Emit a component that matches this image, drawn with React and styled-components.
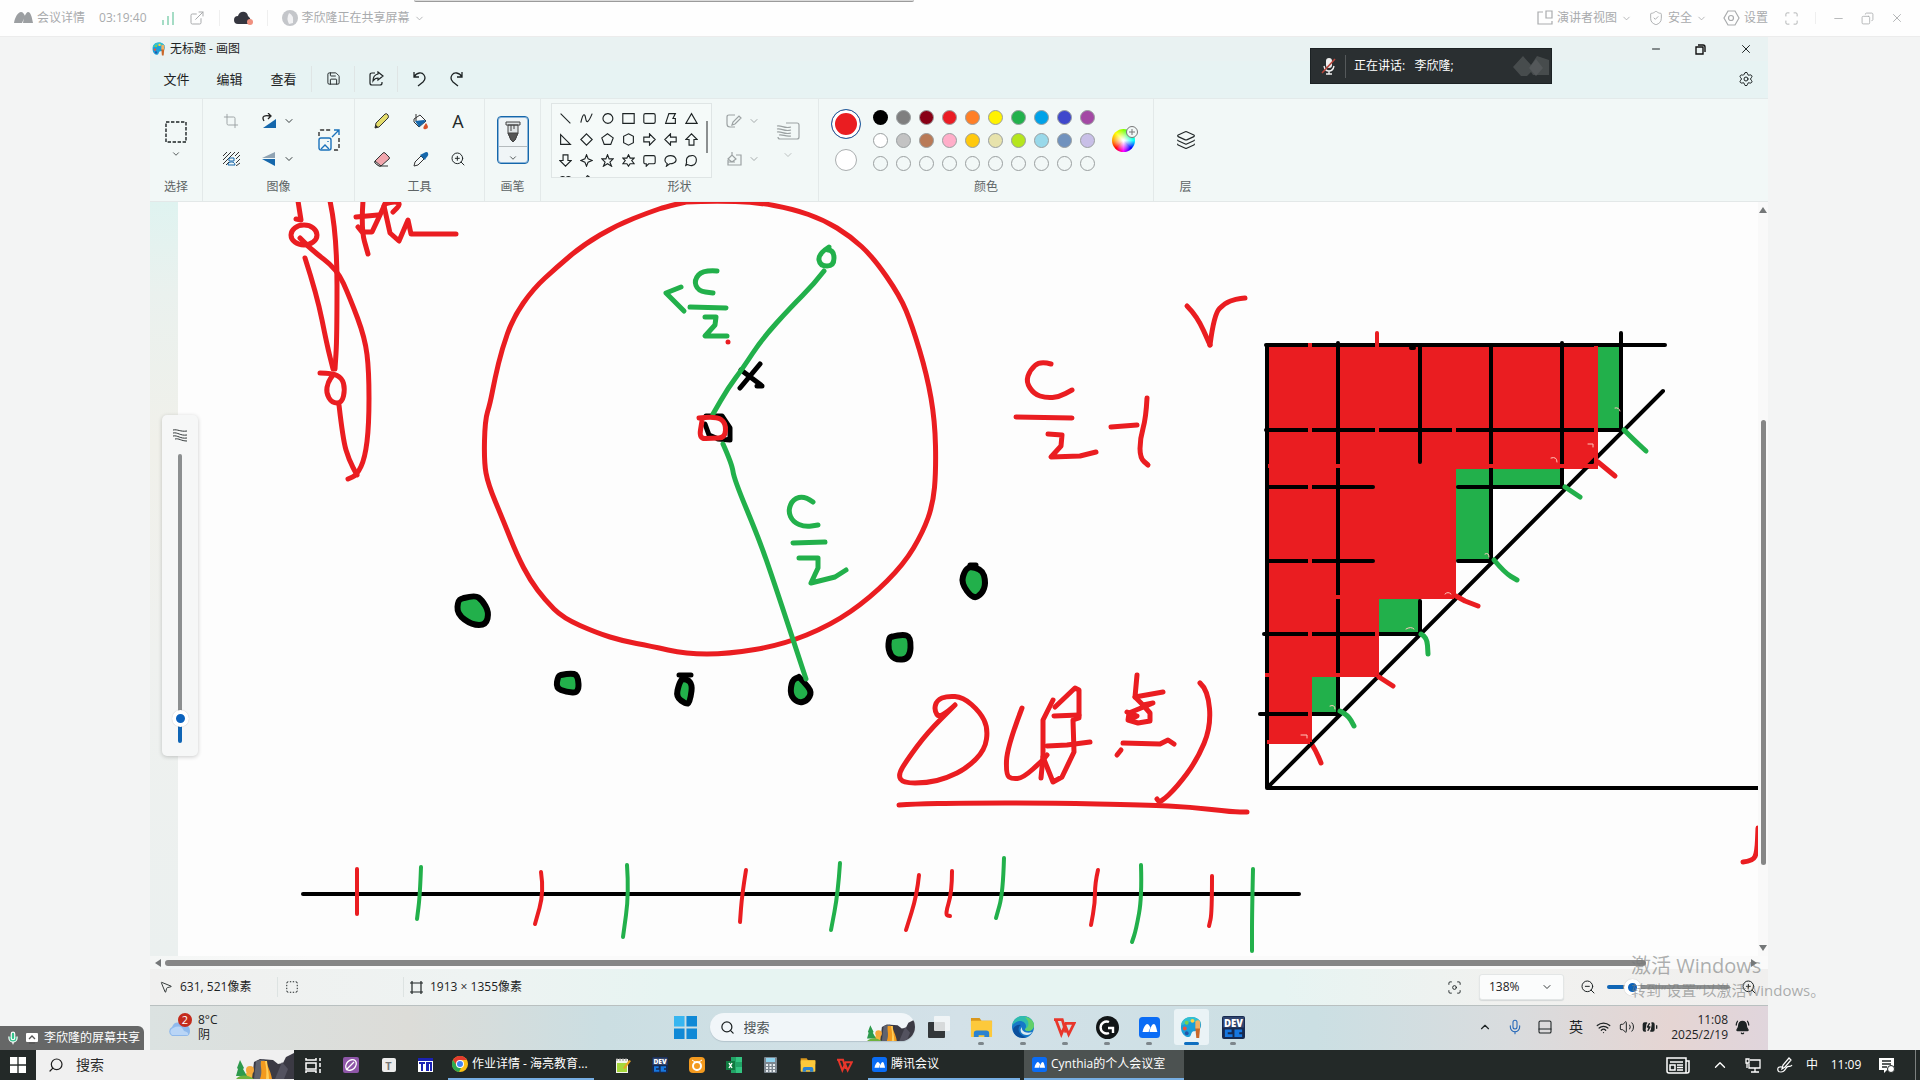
import { useState } from "react";
import styled, { createGlobalStyle } from "styled-components";
import {
  BatteryCharging,
  BellRing,
  ChevronDown,
  ChevronUp,
  Copy,
  Crop,
  ExternalLink,
  Focus,
  Layers,
  Maximize,
  Mic,
  Minus,
  MousePointer2,
  PanelBottom,
  Save,
  Search,
  Settings,
  ShieldCheck,
  SquareDashed,
  Volume2,
  Wifi,
  X,
  ZoomIn,
  ZoomOut,
} from "lucide-react";

const RED = "#ea1d21";
const GREEN = "#22b04b";

const GlobalStyle = createGlobalStyle`
  * {
    box-sizing: border-box;
  }
  body {
    margin: 0;
    font-family: "Open Sans", "Noto Sans CJK SC", sans-serif;
    font-size: 12px;
    line-height: 16px;
    color: #1d2324;
  }
  button, input, select {
    font: inherit;
    color: inherit;
    border: none;
    background: none;
    padding: 0;
    margin: 0;
    outline: none;
  }
  svg {
    display: block;
    flex: none;
  }
`;

const Page = styled.div`
  position: relative;
  display: flex;
  flex-direction: column;
  height: 100vh;
  overflow: hidden;
  background: #f3f4f4;
`;

/* ---------- meeting bar ---------- */

const MeetingBar = styled.header`
  display: flex;
  align-items: center;
  justify-content: space-between;
  height: 37px;
  padding: 0 16px 0 14px;
  background: #fefefe;
  color: #a9abad;
  border-bottom: 1px solid #ececec;
`;

const BarSide = styled.div`
  display: flex;
  align-items: center;
  gap: ${(props) => props.gap}px;
`;

const BarButton = styled.button`
  display: flex;
  align-items: center;
  gap: 4px;
  white-space: nowrap;
`;

const Divider = styled.span`
  width: 1px;
  height: ${(props) => props.size}px;
  background: ${(props) => props.tone || "#dfe5e5"};
`;

const DockedPanel = styled.div`
  position: absolute;
  top: 0;
  left: 414px;
  width: 500px;
  height: 2px;
  background: #dcdcdc;
  border-bottom: 1px solid #9b9b9b;
  border-radius: 0 0 3px 3px;
`;

const Stage = styled.main`
  position: relative;
  flex: 1;
  min-height: 0;
  display: flex;
  padding: 0 152px 0 150px;
`;

const ShareTag = styled.div`
  position: absolute;
  left: 0;
  bottom: 0;
  display: flex;
  align-items: center;
  gap: 6px;
  height: 24px;
  padding: 0 4px 0 6px;
  background: #666767;
  color: #fff;
  border-top-right-radius: 6px;
`;

/* ---------- paint window ---------- */

const Window = styled.section`
  position: relative;
  flex: 1;
  min-width: 0;
  display: flex;
  flex-direction: column;
  background: #eef3f2;
`;

const TitleBar = styled.div`
  display: flex;
  align-items: center;
  height: 24px;
  padding-left: 2px;
  gap: 4px;
  background: #e9f2f2;
`;

const Title = styled.h1`
  flex: 1;
  margin: 0;
  font-size: 12px;
  font-weight: 400;
`;

const MenuRow = styled.nav`
  display: flex;
  align-items: center;
  height: 37px;
  padding-bottom: 2px;
  background: #e7f3f3;
`;

const Cell = styled.button`
  display: flex;
  align-items: center;
  justify-content: center;
  width: ${(props) => props.w}px;
  height: 100%;
  font-size: ${(props) => props.size || 12}px;
`;

const Grow = styled.span`
  flex: 1;
`;

const Speaking = styled.div`
  position: absolute;
  top: 11px;
  right: 216px;
  display: flex;
  align-items: center;
  gap: 8px;
  width: 242px;
  height: 36px;
  padding: 0 2px 0 9px;
  background: #2a2f31;
  border: 1px solid #1c2224;
  color: #fff;
  white-space: pre;
`;

const Ribbon = styled.div`
  display: flex;
  height: 104px;
  padding: 1px 0;
  background: #f2f8f7;
  box-shadow: inset 0 1px #e3eaea, inset 0 -1px #e3e8e8;
`;

const Group = styled.div`
  display: flex;
  flex-direction: column;
  width: ${(props) => props.w}px;
  padding-bottom: 6px;
  color: #5d6465;
  text-align: center;
  border-right: 1px solid ${(props) => (props.last ? "transparent" : "#e3e9e9")};
`;

const GroupBody = styled.div`
  flex: 1;
  display: flex;
  align-items: center;
  justify-content: ${(props) => (props.start ? "flex-start" : "center")};
  padding: 2px 0 0 ${(props) => props.start || 0}px;
  gap: ${(props) => props.gap || 0}px;
  color: #23292a;
`;

const Stack = styled.div`
  display: flex;
  flex-direction: column;
  align-items: center;
  gap: ${(props) => props.gap}px;
`;

const ToolGrid = styled.div`
  display: grid;
  grid-template-columns: repeat(3, 38px);
  grid-auto-rows: 38px;
`;

const ImageGrid = styled.div`
  display: grid;
  grid-template-columns: 20px 40px 24px;
  grid-auto-rows: 38px;
  column-gap: 18px;
  align-items: center;
`;

const Tool = styled.button`
  display: flex;
  align-items: center;
  justify-content: center;
  grid-row: ${(props) => (props.tall ? "1 / span 2" : "auto")};
  grid-column: ${(props) => (props.tall ? 3 : "auto")};
  font-size: 18px;
`;

const Split = styled.button`
  display: grid;
  grid-template-columns: 20px 20px;
  justify-items: center;
  align-items: center;
  height: 38px;
  color: ${(props) => (props.muted ? "#9ca2a3" : "#23292a")};
`;

const BrushButton = styled.button`
  display: flex;
  flex-direction: column;
  align-items: center;
  width: 32px;
  height: 48px;
  border: 1px solid #1567ab;
  border-radius: 4px;
  background: #f0f5f7;
  box-shadow: 0 0 0 1px #8ab4d8 inset;

  svg:first-child {
    margin: 3px 0 2px;
  }
`;

const BrushArrow = styled.span`
  display: flex;
  justify-content: center;
  width: 28px;
  padding-top: 3px;
  border-top: 1px solid #b4babd;
`;

const ShapeBox = styled.div`
  position: relative;
  display: grid;
  grid-template-columns: repeat(7, 21px);
  grid-auto-rows: 21px;
  width: 161px;
  height: 75px;
  padding: 4px 3px;
  margin-right: 12px;
  overflow: hidden;
  background: #f5faf9;
  border: 1px solid #dfe5e5;

  &::after {
    content: "";
    position: absolute;
    top: 17px;
    right: 3px;
    width: 2px;
    height: 32px;
    background: #8b8f90;
  }
`;

const ShapeButton = styled.button`
  display: flex;
  align-items: center;
  justify-content: center;
`;

const ActiveColor = styled.button`
  width: ${(props) => (props.on ? 30 : 22)}px;
  height: ${(props) => (props.on ? 30 : 22)}px;
  border-radius: 50%;
  border: 1px solid ${(props) => (props.on ? "#1567ab" : "#aaaeaf")};
  background: ${(props) => props.color};
  box-shadow: ${(props) => (props.on ? "inset 0 0 0 3px #fff" : "none")};
`;

const Palette = styled.div`
  display: grid;
  grid-template-columns: repeat(10, 15px);
  grid-auto-rows: 15px;
  gap: 8px;
  margin-right: 5px;
`;

const Swatch = styled.button`
  border-radius: 50%;
  border: 1px solid ${(props) => (props.dark ? "transparent" : "#9a9fa0")};
  background: ${(props) => props.color};
`;

const Wheel = styled.button`
  position: relative;
  width: 23px;
  height: 23px;
  border-radius: 50%;
  background: radial-gradient(circle, #fff 5%, transparent 65%),
    conic-gradient(#8f0, #0f6, #0ff, #00f, #f0f, #f00, #f90, #ff0, #8f0);

  svg {
    position: absolute;
    top: -3px;
    right: -3px;
  }
`;

/* ---------- workspace ---------- */

const Workspace = styled.div`
  position: relative;
  flex: 1;
  min-height: 0;
  display: flex;
  padding-left: 28px;
  background: linear-gradient(#dff3f0, #eaf1ee 12%, #f0f0ea 32%, #eff1ef 60%, #ebf0ef);
`;

const Canvas = styled.svg`
  flex: 1;
  min-width: 0;
  height: 100%;
  background: #fdfdfd;
`;

const VScroll = styled.div`
  display: flex;
  flex-direction: column;
  align-items: center;
  width: 10px;
  background: #f9f9f9;
`;

const HScroll = styled.div`
  display: flex;
  align-items: center;
  height: 13px;
  background: linear-gradient(90deg, #f4f6f5, #fafafa 10%, #fafafa);
`;

const Thumb = styled.div`
  flex: ${(props) => props.share};
  width: ${(props) => (props.vertical ? "5px" : "auto")};
  height: ${(props) => (props.vertical ? "auto" : "6px")};
  border-radius: 3px;
  background: #868686;
`;

const Gap = styled.span`
  flex: ${(props) => props.share};
`;

const Arrow = styled.button`
  display: flex;
  align-items: center;
  justify-content: center;
  width: ${(props) => props.w}px;
  height: ${(props) => props.h}px;
`;

const SizePanel = styled.label`
  position: absolute;
  top: 213px;
  left: 12px;
  display: flex;
  flex-direction: column;
  align-items: center;
  gap: 11px;
  width: 36px;
  height: 341px;
  padding: 12px 0 13px;
  border-radius: 5px;
  background: #f6f7f7;
  box-shadow: 0 1px 4px rgba(0, 0, 0, 0.2);
`;

const Slider = styled.input`
  appearance: none;
  border-radius: 2px;
  writing-mode: ${(props) => (props.$vertical ? "vertical-lr" : "horizontal-tb")};
  direction: ${(props) => (props.$vertical ? "rtl" : "ltr")};
  width: ${(props) => (props.$vertical ? "4px" : "123px")};
  height: ${(props) => (props.$vertical ? "289px" : "4px")};
  background: linear-gradient(
    ${(props) => (props.$vertical ? "0deg" : "90deg")},
    #1065b5 ${(props) => props.$fill}%,
    #8c8f90 ${(props) => props.$fill}%
  );

  &::-webkit-slider-thumb {
    appearance: none;
    width: 17px;
    height: 17px;
    border-radius: 50%;
    border: 4px solid #fff;
    background: #0b62bd;
    box-shadow: 0 0 1px rgba(0, 0, 0, 0.25);
  }
`;

const StatusBar = styled.div`
  display: flex;
  align-items: center;
  height: 36px;
  padding: 0 11px 0 9px;
  background: linear-gradient(90deg, #f0f0ef, #eef3f2 20%, #e7f4f2 32%, #e7f4f2 70%, #f1f1ef 84%, #f0efee);
`;

const StatusItem = styled.div`
  display: flex;
  align-items: center;
  gap: 7px;
  width: ${(props) => props.w}px;
  padding-left: ${(props) => props.indent || 0}px;
  height: 20px;
  white-space: nowrap;
  border-right: 1px solid ${(props) => (props.line ? "#dde3e2" : "transparent")};
`;

const ZoomField = styled.label`
  display: grid;
  align-items: center;
  width: 85px;
  height: 26px;
  margin: 0 16px 0 17px;
  background: #fbfcfc;
  border: 1px solid #e3e6e6;
  border-radius: 3px;
  box-shadow: 0 1px 1px #d4d8d8;

  select {
    appearance: none;
    grid-area: 1 / 1;
    width: 100%;
    padding-left: 9px;
  }
  svg {
    grid-area: 1 / 1;
    justify-self: end;
    margin-right: 10px;
    pointer-events: none;
  }
`;

const ZoomControls = styled.div`
  display: flex;
  align-items: center;
  gap: 11px;
`;

/* ---------- taskbars ---------- */

const InnerTaskbar = styled.div`
  display: grid;
  grid-template-columns: 1fr auto 1fr;
  align-items: center;
  height: 45px;
  padding-bottom: 2px;
  border-top: 1px solid #b9c0c0;
  background: linear-gradient(
    90deg,
    #dbe2e1,
    #dcdcd8 16%,
    #cbdee2 28%,
    #d3e1e8 50%,
    #cbdfe3 72%,
    #d9dcde 84%,
    #e5d5d3 94%,
    #e0d5dc
  );
`;

const Weather = styled.div`
  display: flex;
  align-items: center;
  gap: 6px;
  padding-left: 17px;
  line-height: 15px;
`;

const Dock = styled.div`
  display: flex;
  align-items: center;
  gap: 7px;
`;

const DockItem = styled.button`
  position: relative;
  display: flex;
  align-items: center;
  justify-content: center;
  width: 35px;
  height: 36px;
  border-radius: 3px;
  background: ${(props) => (props.active ? "#eaf3f6" : "none")};

  &::after {
    content: "";
    position: absolute;
    bottom: 0;
    width: ${(props) => (props.active ? 15 : 6)}px;
    height: 3px;
    border-radius: 2px;
    background: ${(props) => (props.active ? "#0f6fc0" : props.open ? "#7d868b" : "transparent")};
  }
`;

const SearchPill = styled.label`
  display: flex;
  align-items: center;
  gap: 9px;
  width: 205px;
  height: 28px;
  padding-left: 10px;
  border-radius: 14px;
  overflow: hidden;
  background: #f1f6f9;
  box-shadow: 0 1px 1px #b4c4cc;

  input {
    flex: 1;
    min-width: 0;
    font-size: 13px;
  }
  input::placeholder {
    color: #4c5355;
  }
`;

const Tray = styled.div`
  display: flex;
  align-items: center;
  justify-content: flex-end;
  height: 100%;
  padding-right: ${(props) => props.end}px;
`;

const Clock = styled.time`
  margin: 0 7px 0 10px;
  line-height: 15px;
  text-align: right;
  min-width: 57px;
`;

const Taskbar = styled.footer`
  display: flex;
  align-items: stretch;
  height: 30px;
  background: #232928;
  color: #fff;
`;

const TaskSearch = styled.label`
  display: flex;
  align-items: center;
  gap: 12px;
  width: 258px;
  padding-left: 12px;
  background: #f0f0f0;
  color: #1c1c1c;

  input {
    flex: 1;
    min-width: 0;
    font-size: 14px;
  }
  input::placeholder {
    color: #2b2b2b;
  }
`;

const Task = styled.button`
  display: flex;
  align-items: center;
  gap: 4px;
  width: ${(props) => props.w}px;
  padding: 0 4px;
  margin-left: 4px;
  white-space: nowrap;
  background: ${(props) => (props.active ? "#4c5251" : "none")};
  border-bottom: 2px solid #76aee3;
`;

const AppRow = styled.div`
  display: flex;
  margin: 0 1px 0 10px;
`;

const Badge = styled.span`
  display: inline-flex;
  align-items: center;
  justify-content: center;
  width: ${(props) => props.box}px;
  height: ${(props) => props.box}px;
  border-radius: ${(props) => props.round || 2}px;
  background: ${(props) => props.bg};
  color: ${(props) => props.fg || "#fff"};
  font-size: ${(props) => props.size}px;
  line-height: 1;
  font-weight: 700;
`;

const ShowDesktop = styled.span`
  width: 5px;
  border-left: 1px solid #7c807f;
`;

const Watermark = styled.div`
  position: absolute;
  right: 94px;
  bottom: 79px;
  width: 195px;
  color: rgba(120, 122, 122, 0.6);
  white-space: nowrap;
  pointer-events: none;
  font-size: 15px;
  line-height: 22px;

  p {
    margin: 0;
  }
  p:first-child {
    font-size: 20px;
    line-height: 26px;
  }
`;

/* ---------- small drawings ---------- */

const Chevron = ({ size = 12, color }) => <ChevronDown size={size} strokeWidth={1.8} color={color} />;

const PaintLogo = ({ size }) => (
  <svg width={size} height={size} viewBox="0 0 24 24">
    <path d="M12 1C5 1 1 6 1 12s4 10 8 10c3 0 2-5 5-6 4-1 8-1 8-7 0-5-5-8-10-8z" fill="#1a9fd8" />
    <path d="M12 1C6 1 2 4 1 9c4 1 6-3 11-3 4 0 8 1 10 1-2-4-6-6-10-6z" fill="#31c0d0" />
    <circle cx="5" cy="13" r="2" fill="#f24f3b" />
    <circle cx="7" cy="7" r="2" fill="#7ccf4a" />
    <circle cx="13" cy="5" r="2" fill="#ffd23e" />
    <circle cx="7" cy="18" r="2" fill="#2456a8" />
    <path d="M16 12h5l-1 11h-3z" fill="#c9682a" />
    <path d="M16 6q3-3 5 0v7h-5z" fill="#f2b063" />
  </svg>
);

const WinLogo = ({ size, color, color2 }) => (
  <svg width={size} height={size} viewBox="0 0 24 24">
    <path d="M0 0h11v11H0z" fill={color} />
    <path d="M13 0h11v11H13zM0 13h11v11H0zM13 13h11v11H13z" fill={color2 || color} />
  </svg>
);

const MeetLogo = ({ size, bg, fg }) => (
  <svg width={size} height={size} viewBox="0 0 24 24">
    <rect width="24" height="24" rx="4" fill={bg} />
    <path d="M4 17c1-5 3-8 5-9 2 0 3 2 4 4l-2 5zM12 17c1-5 3-9 5-9s3 5 4 9z" fill={fg} />
  </svg>
);

const Folder = ({ size }) => (
  <svg width={size} height={size} viewBox="0 0 24 24">
    <path d="M1 2h9l2 3h11v6H1z" fill="#d9971c" />
    <rect x="1" y="5" width="22" height="17" rx="1" fill="#fdc93b" />
    <path d="M4 22v-4a3 3 0 0 1 3-3h10a3 3 0 0 1 3 3v4h-5v-2H9v2z" fill="#2c82d0" />
  </svg>
);

const Edge = () => (
  <svg width="24" height="24" viewBox="0 0 24 24">
    <circle cx="12" cy="12" r="11" fill="#1678c8" />
    <path d="M1 11C2 4 7 1 12 1c7 0 11 5 11 9 0 4-3 6-6 6-2 0-3-1-3-2 3-4-1-8-5-8-3 0-6 2-8 5z" fill="#2fbcae" />
    <path d="M14 2c6 1 9 5 9 8 0 4-3 6-6 6-2 0-3-1-3-2 3-1 6-6 0-12z" fill="#63d06a" />
    <path d="M10 10c-5 3-2 11 6 12-8 3-14-2-14-8 1-3 5-5 8-4z" fill="#0b4f9c" />
    <path d="M11 12c-1 4 4 7 10 5-1 2-3 3-5 3-6 0-8-5-5-8z" fill="#dcebf2" />
  </svg>
);

const Wps = ({ size }) => (
  <svg width={size} height={size} viewBox="0 0 24 24" fill="none" stroke="#e8362b" strokeWidth="3">
    <path d="M0 4h9l4 14M2 4l6 16 5-12h9l-6 12-4-10" />
  </svg>
);

const DevLogo = ({ size, text }) => (
  <svg width={size} height={size} viewBox="0 0 24 24">
    <rect width="24" height="24" rx="2" fill="#16294f" />
    <rect x="1" y="1" width="22" height="11" fill="#31456f" />
    <text x="12" y="11" textAnchor="middle" fontSize={text} fontWeight="800" fill="#fff">
      DEV
    </text>
    <path d="M3 14h7v3H6v2h5v3H3zM13 14h8v3h-3v2h3v3h-8z" fill="#1677e0" />
  </svg>
);

const Scenery = ({ w }) => (
  <svg width={w} height="28" viewBox="0 0 58 28" preserveAspectRatio="xMidYMax meet">
    <path d="M8 28c2-8 6-11 11-11l4 11z" fill="#f2b43c" />
    <path d="M16 28l2-17 6-3 13 1 5 4 5-1 3-6 6-3 2-1v26z" fill="#3b3a44" />
    <path d="M20 10l8-2 3 7-5 13h-8z" fill="#5f626e" />
    <path d="M46 11l6 7-4 10h-9z" fill="#53525f" />
    <path d="M25 10h6c0 6 4 10 5 18H24c3-8 0-12 1-18z" fill="#f29a1f" />
    <path d="M29 10h2c0 6 2 11 2 18h-3c1-8 0-12-1-18z" fill="#ffcf5a" />
    <path d="M4 9l4 8-1 1 4 7H0l2-7-1-1z" fill="#2d9a4c" />
    <path d="M0 28c5-5 12-4 18 0z" fill="#6fb23e" />
    <circle cx="14" cy="19" r="4" fill="#f6a83a" />
  </svg>
);

const Waves = ({ w }) => (
  <svg width={w} height={w} viewBox="0 0 16 16" fill="none" stroke="#33393a">
    <path d="M1 3c5-1 7 2 14 1M1 6c5-1 7 3 14 2M1 9c5-1 7 3 14 2M3 12c4-1 6 2 12 2" />
  </svg>
);

const Triangle = ({ turn }) => (
  <svg width="8" height="8" viewBox="0 0 8 8">
    <path d="M4 1l4 6H0z" fill="#747778" transform={`rotate(${turn} 4 4)`} />
  </svg>
);

const SHAPES = [
  "M2 2l12 12",
  "M1 13C4 0 6 2 7 8s3 6 8-6",
  "M8 2a6 6 0 1 0 1 0z",
  "M1 2h14v12H1z",
  "M3 2h10q2 0 2 2v8q0 2-2 2H3q-2 0-2-2V4q0-2 2-2z",
  "M6 2h8l-3 6h3v6H2z",
  "M8 2l7 12H1z",
  "M2 2v12h12z",
  "M8 1l7 7-7 7-7-7z",
  "M8 1l7 5-3 8H4L1 6z",
  "M8 1l6 3v8l-6 3-6-3V4z",
  "M1 5h7V1l7 7-7 7v-4H1z",
  "M15 5H8V1L1 8l7 7v-4h7z",
  "M5 15V8H1l7-7 7 7h-4v7z",
  "M5 1v7H1l7 7 7-7h-4V1z",
  "M8 1l2 5 5 2-5 2-2 5-2-5-5-2 5-2z",
  "M8 1l2 5h5l-4 4 2 5-5-3-5 3 2-5-4-4h5z",
  "M8 1l2 4h5l-3 3 3 4h-5l-2 3-2-3H1l3-4-3-3h5z",
  "M3 2h10q2 0 2 2v6q0 2-2 2H7l-3 3v-3H3q-2 0-2-2V4q0-2 2-2z",
  "M4 12C-1 9 1 2 8 2s9 7 4 9c-2 1-4 1-5 1l-4 3z",
  "M8 2c3-1 6 2 6 5s-1 6-5 7c-2 1-5-1-6-1l-2 1 1-4C1 6 3 2 8 2z",
  "M8 4C5 0 0 2 2 7l6 7 6-7c2-5-3-7-6-3z",
  "M9 1L4 8h4l-2 7 7-8H9l2-5z",
];

const COLORS = [
  "#000", "#7f7f7f", "#880015", "#ea1c24", "#ff7f27", "#fff200", "#22b14c", "#00a2e8", "#3f48cc", "#a349a4",
  "#fff", "#c3c3c3", "#b97a57", "#ffaec9", "#ffc90e", "#e7e3ac", "#b5e61d", "#99d9ea", "#7092be", "#c8bfe7",
];

/* ---------- canvas drawing ---------- */

// joins the midpoints of the given points with quadratic curves
const smooth = (text) => {
  const p = text.split(" ").map((s) => s.split(",").map(Number));
  let d = `M${p[0]}`;
  for (let i = 1; i < p.length - 1; i++) {
    d += `Q${p[i]} ${(p[i][0] + p[i + 1][0]) / 2},${(p[i][1] + p[i + 1][1]) / 2}`;
  }
  return d + `L${p[p.length - 1]}`;
};

const RED_CURVES = [
  "686,202 668,206 650,212 617,225 583,245 557,267 533,289 513,318 502,349 495,378 490,404 485,420 484,462 488,484 503,520 517,555 530,580 545,600 563,618 597,633 623,641 650,646 686,654 728,654 782,645 831,625 870,598 904,564 923,532 933,504 936,471 935,421 927,375 912,325 900,296 873,257 850,236 824,220 793,209 755,202 716,201 686,202",
  "305,258 317,295 327,345 333,369",
  "300,238 310,249 337,269 350,298 365,338 369,371 369,425 365,458 357,475 348,479",
  "320,373 332,373 342,378 345,389 342,403 332,403 326,393 328,382 333,375",
  "1051,364 1040,361 1030,370 1026,382 1034,394 1046,398 1059,397 1072,390",
  "955,705 940,719 934,710 937,700 947,696 963,697 980,712 988,728 985,750 967,768 947,778 927,783 903,783 898,775 907,760 927,733 955,705",
  "1022,708 1007,747 1006,775 1012,779 1023,778 1043,760 1047,755",
  "1200,683 1208,690 1211,727 1197,760 1177,787 1160,803 1157,799",
  "899,805 913,804 963,803 1047,803 1147,805 1190,807 1233,812 1247,812",
  "1743,862 1753,861 1757,852 1758,828",
  "330,201 337,233 337,338 335,369",
  "339,405 343,440 349,460 357,475",
  "363,201 361,229 368,254",
  "1147,398 1146,418 1140,439 1140,458 1148,465",
  "1210,345 1214,314 1225,303 1236,299 1245,298",
  "1187,306 1197,316 1210,345",
  "385,204 394,201 401,204 393,212",
  "1311,743 1316,751 1321,763",
];

const RED_LINES = [
  "298,201 301,220 296,219",
  "356,217 378,215",
  "358,227 362,232 372,232 380,215 385,204",
  "384,206 390,233 399,241 408,220 411,234 456,234",
  "1016,417 1072,418",
  "1048,434 1062,435 1061,446 1051,457 1080,456 1096,452",
  "1111,427 1137,425",
  "1053,700 1043,720 1043,757 1041,778",
  "1055,707 1075,688 1079,690 1079,718 1073,720 1074,752 1062,777 1053,782 1047,767 1043,757",
  "1054,716 1079,715",
  "1047,746 1067,745 1090,742",
  "1137,675 1135,697 1163,692",
  "1135,697 1143,705 1153,703 1129,713 1128,720 1138,723 1150,721 1150,713 1143,705",
  "1127,712 1137,716 1131,719",
  "1123,743 1160,744 1168,740 1174,744",
  "1117,755 1121,750",
  "1598,462 1615,476",
  "1456,596 1465,601 1478,606",
  "1379,677 1393,686",
];

const GREEN_CURVES = [
  "824,271 814,284 791,307 762,339 743,368 728,388 713,414",
  "723,444 732,464 734,479 759,539 774,582 806,679",
  "717,271 703,270 694,280 698,291 713,293",
  "813,502 805,496 793,499 788,511 793,522 805,527 818,525",
  "1624,430 1633,439 1646,451",
  "1494,560 1505,573 1517,580",
  "1421,634 1427,637 1428,654",
  "1340,711 1348,715 1354,726",
];

const GREEN_LINES = [
  "681,287 666,293 684,311",
  "690,307 726,308",
  "705,317 716,317 715,325 705,336 727,336",
  "793,543 825,542",
  "799,558 818,558 818,568 811,583 835,577 846,570",
  "1565,487 1580,497",
];

const BLOBS = [
  "464,598 475,595 482,600 489,612 486,625 472,625 457,614 458,600 464,598",
  "561,675 570,673 578,675 579,693 566,692 556,688 558,676 561,675",
  "682,679 693,679 690,703 686,704 676,697 679,684 682,679",
  "799,677 804,682 812,692 807,701 798,703 790,695 792,680 799,677",
  "891,637 902,634 911,637 910,659 894,660 888,650 889,638 891,637",
  "970,567 982,568 986,583 982,594 973,599 961,583 965,570 970,567",
];

const TICKS = [
  [RED, "357,869 357,914"],
  [GREEN, "421,867 420,895 417,919"],
  [RED, "541,872 544,892 535,924"],
  [GREEN, "627,865 629,893 623,937"],
  [RED, "746,870 742,895 740,922"],
  [GREEN, "840,863 838,893 831,930"],
  [RED, "919,875 917,895 906,930"],
  [RED, "952,871 952,892 945,915 950,916"],
  [GREEN, "1004,858 1003,893 996,918"],
  [RED, "1098,870 1095,883 1095,903 1091,925"],
  [GREEN, "1141,865 1142,897 1136,930 1132,942"],
  [RED, "1212,876 1212,913 1209,926"],
  [GREEN, "1253,869 1252,913 1252,951"],
];

const Drawing = () => (
  <Canvas
    viewBox="178 202 1580 754"
    preserveAspectRatio="xMinYMin slice"
    fill="none"
    strokeLinecap="round"
    strokeLinejoin="round"
  >
    <g stroke={RED} strokeWidth="5">
      {RED_CURVES.map((c) => (
        <path key={c} d={smooth(c)} />
      ))}
      <ellipse cx="304" cy="235" rx="13" ry="10" />
    </g>
    <path d="M741,370L761,385M760,364L740,388M757,386h5" stroke="#000" strokeWidth="5" />
    <g stroke="#000" strokeWidth="6" fill={GREEN}>
      {BLOBS.map((b) => (
        <path key={b} d={smooth(b)} />
      ))}
      <path d="M679,675h12M970,565h6" strokeWidth="5" />
    </g>
    <path d="M706,416L722,416L730,428L730,440L718,439M705,424L709,435L716,438" stroke="#000" strokeWidth="5" />

    <path d="M1267,346H1598V469H1456V599H1379V677H1312V743H1267z" fill={RED} />
    <path
      d="M1598,346h23v84h-23zM1456,469h107v18h-72v74h-35zM1379,599h41v35h-41zM1312,677h26v37h-26z"
      fill={GREEN}
    />
    <g stroke="#000" strokeWidth="4">
      <path d="M1267,345V788H1758M1266,345H1665M1338,343V714M1420,345V462M1420,601V634M1491,345V561M1562,343V487M1621,333V430" />
      <path d="M1266,430H1621M1268,487H1373M1458,487H1562M1268,561H1373M1458,561H1491M1264,634H1421M1260,714H1338" />
      <path d="M1268,787L1663,391M1411,348h3" />
    </g>
    <g stroke={RED} strokeWidth="4" strokeLinecap="butt">
      <path d="M1310,343V742M1377,343V675M1454,428V597M1596,346V467M1268,466H1596M1270,597H1454M1265,675H1377M1267,742H1310" />
      <path d="M1377,333V345" strokeLinecap="round" />
    </g>
    <path
      d="M1615,408q4-1 5,3M1588,444h5v3M1551,458q6-2 6,4M1485,554q4-2 4,3M1445,594q3-3 6,0M1406,629q5-3 8,0M1330,706q5-2 5,3M1301,735h6v3"
      stroke="#ffc9bd"
      strokeWidth="1"
    />

    <g stroke={RED} strokeWidth="5">
      {RED_LINES.map((p) => (
        <polyline key={p} points={p} />
      ))}
      <path d="M728,342v0" />
    </g>
    <g stroke={GREEN} strokeWidth="5">
      {GREEN_CURVES.map((c) => (
        <path key={c} d={smooth(c)} />
      ))}
      {GREEN_LINES.map((p) => (
        <polyline key={p} points={p} />
      ))}
      <path d="M829,247Q818,254 819,260T827,266T834,258T828,250z" />
    </g>
    <path d={smooth("699,418 716,416 726,423 725,438 712,438 699,439 702,421")} stroke={RED} strokeWidth="5" />

    <path d="M303,894H1299" stroke="#000" strokeWidth="4" />
    {TICKS.map(([color, points]) => (
      <path key={points} d={smooth(points)} stroke={color} strokeWidth="4" />
    ))}
  </Canvas>
);

const RibbonBar = () => (
  <Ribbon>
    <Group w={53}>
      <GroupBody>
        <Stack gap={6}>
          <svg width="22" height="22" viewBox="0 0 22 22" fill="none" stroke="#1d2324">
            <rect x="1" y="1" width="20" height="20" strokeWidth="1.4" strokeDasharray="3.4 1.6" />
          </svg>
          <Chevron size={10} />
        </Stack>
      </GroupBody>
      选择
    </Group>
    <Group w={152}>
      <GroupBody start={18}>
        <ImageGrid>
          <Tool aria-label="裁剪">
            <Crop size={16} strokeWidth={1.4} color="#9aa0a1" />
          </Tool>
          <Split aria-label="旋转">
            <svg width="16" height="16" viewBox="0 0 16 16" fill="none">
              <path d="M15 6v9H2z" fill="#1567ab" />
              <path d="M3 8C0 3 4 2 9 3M7 0l3 3-3 3" stroke="#222" strokeWidth="1.3" />
            </svg>
            <Chevron />
          </Split>
          <Tool tall aria-label="调整大小">
            <svg width="22" height="22" viewBox="0 0 22 22" fill="none" strokeWidth="1.4">
              <path d="M1 7V3q0-2 2-2h11M21 9v10q0 2-2 2h-3" stroke="#333" strokeDasharray="4 2" />
              <rect x="1" y="9" width="12" height="12" rx="2" stroke="#1b72bb" />
              <path d="M3 20l4-4 4 4M14 8l7-7M16 1h5v5M10 12v1" stroke="#1b72bb" />
            </svg>
          </Tool>
          <Tool aria-label="透明">
            <svg width="17" height="14" viewBox="0 0 17 14" stroke="#333" fill="none">
              <path d="M0 4l4-4M0 8l8-8M0 12l12-12M3 13l3-3M12 4l4-4M13 7l4-4M13 11l4-4M13 14l4-3" />
              <path d="M5 13c0-4 7-4 7 0M6 6h5v3H6zM5 13h7" stroke="#1567ab" />
            </svg>
          </Tool>
          <Split aria-label="翻转">
            <svg width="16" height="14" viewBox="0 0 16 14">
              <path d="M14 0v6H1z" fill="#8fa3b3" />
              <path d="M1 7h13v7z" fill="#1567ab" />
            </svg>
            <Chevron />
          </Split>
        </ImageGrid>
      </GroupBody>
      图像
    </Group>
    <Group w={130}>
      <GroupBody start={8}>
        <ToolGrid>
          <Tool aria-label="铅笔">
            <svg width="16" height="16" viewBox="0 0 16 16">
              <path d="M1 15l1-5 9-9q2-1 3 1t0 3l-9 9z" fill="#e3dc6b" stroke="#333" />
              <path d="M1 15l1-3 2 2z" fill="#222" />
            </svg>
          </Tool>
          <Tool aria-label="填充">
            <svg width="17" height="17" viewBox="0 0 17 17">
              <path d="M2 6l6-4 6 6-7 6-5-5z" fill="#f8fbfb" stroke="#333" />
              <path d="M3 8l9-1 2 1-7 6z" fill="#1567ab" />
              <path d="M4 1v7" stroke="#333" />
              <path d="M14 10q4 5 0 6t-2-3z" fill="#d8532a" />
            </svg>
          </Tool>
          <Tool aria-label="文本">A</Tool>
          <Tool aria-label="橡皮擦">
            <svg width="17" height="17" viewBox="0 0 17 17" stroke="#333">
              <path d="M1 10l8-8q1-1 2 0l4 4q1 1 0 2l-8 7H5l-4-3z" fill="#f1a7ae" />
              <path d="M1 10l6 5H5l-4-3zM7 15h7" fill="#fff" />
            </svg>
          </Tool>
          <Tool aria-label="取色器">
            <svg width="17" height="17" viewBox="0 0 17 17">
              <path d="M2 15l1-4 6-6 3 3-6 6z" fill="#f4f8f8" stroke="#333" />
              <path d="M8 4l5 5 1-2 1-1q2-2 1-4t-4 0l-2 1z" fill="#1567ab" />
            </svg>
          </Tool>
          <Tool aria-label="放大镜">
            <ZoomIn size={16} strokeWidth={1.5} />
          </Tool>
        </ToolGrid>
      </GroupBody>
      工具
    </Group>
    <Group w={56}>
      <GroupBody>
        <BrushButton aria-label="画笔">
          <svg width="16" height="24" viewBox="0 0 16 24" stroke="#444">
            <path d="M1 2h14v3H1zM3 5h10v8l-3 7H6l-3-7z" fill="#dfe4e6" />
            <path d="M3 13h10l-3 7-2 2-2-2z" fill="#555" />
            <path d="M6 5v6M9 5v4" fill="none" />
          </svg>
          <BrushArrow>
            <Chevron size={10} />
          </BrushArrow>
        </BrushButton>
      </GroupBody>
      画笔
    </Group>
    <Group w={278}>
      <GroupBody start={10}>
        <ShapeBox>
          {SHAPES.map((d, i) => (
            <ShapeButton key={d} aria-label={`形状 ${i + 1}`}>
              <svg width="13" height="13" viewBox="0 0 16 16" fill="none" stroke="#1d2324" strokeWidth="1.4">
                <path d={d} />
              </svg>
            </ShapeButton>
          ))}
        </ShapeBox>
        <Stack gap={0}>
          <Split muted aria-label="形状轮廓">
            <svg width="16" height="14" viewBox="0 0 16 14" fill="none" stroke="#9ca2a3" strokeWidth="1.2">
              <path d="M9 1H3Q1 1 1 3v7q0 3 3 3h5M6 11l1-3 6-6 2 2-6 6z" />
            </svg>
            <Chevron />
          </Split>
          <Split muted aria-label="形状填充">
            <svg width="16" height="14" viewBox="0 0 16 14" fill="none" stroke="#9ca2a3" strokeWidth="1.2">
              <path d="M10 3h5v10H2V8M2 7l4-4 4 4-4 3zM6 3V0M2 10h7" />
            </svg>
            <Chevron />
          </Split>
        </Stack>
        <GroupBody start={12}>
          <Stack gap={9}>
            <svg width="24" height="18" viewBox="0 0 24 18" fill="none" stroke="#9ca2a3" strokeWidth="1.2">
              <path d="M10 1h11q2 0 2 2v12q0 2-2 2H4q-2 0-2-2M1 4c5-1 7 3 14 1M1 7c5-1 7 3 14 1M1 10c5-1 7 3 14 1M3 13c4-1 6 2 12 1" />
            </svg>
            <Chevron size={12} color="#b5baba" />
          </Stack>
        </GroupBody>
      </GroupBody>
      形状
    </Group>
    <Group w={335}>
      <GroupBody start={12} gap={12}>
        <Stack gap={10}>
          <ActiveColor on color={RED} aria-label="颜色 1" />
          <ActiveColor color="#fff" aria-label="颜色 2" />
        </Stack>
        <Palette>
          {COLORS.map((c) => (
            <Swatch key={c} color={c} dark={c === "#000"} aria-label={c} />
          ))}
          {COLORS.slice(0, 10).map((c, i) => (
            <Swatch key={i} color="none" aria-label="空" />
          ))}
        </Palette>
        <Wheel aria-label="编辑颜色">
          <svg width="12" height="12" viewBox="0 0 12 12" fill="#f2f8f7" stroke="#777">
            <circle cx="6" cy="6" r="5.5" />
            <path d="M6 3v6M3 6h6" />
          </svg>
        </Wheel>
      </GroupBody>
      颜色
    </Group>
    <Group w={64} last>
      <GroupBody>
        <Layers size={20} strokeWidth={1.4} />
      </GroupBody>
      层
    </Group>
  </Ribbon>
);

const App = () => {
  let [brush, setBrush] = useState(6);
  let [zoom, setZoom] = useState(16);

  return (
    <Page>
      <GlobalStyle />
      <MeetingBar>
        <BarSide gap={14}>
          <BarButton>
            <svg width="19" height="14" viewBox="0 0 19 14" fill="#9c9fa2">
              <path d="M0 12C1 6 4 1 7 1c2 0 3 2 4 4l-3 7zM9 12c1-6 3-11 5-11 3 0 4 6 5 11z" />
            </svg>
            会议详情
          </BarButton>
          <span>03:19:40</span>
          <svg width="14" height="14" viewBox="0 0 14 14" fill="#a5dcc5">
            <path d="M1 9h2v5H1zM6 5h2v9H6zM11 1h2v13h-2z" />
          </svg>
          <ExternalLink size={16} strokeWidth={1.5} />
          <Divider size={16} tone="#efefef" />
          <svg width="19" height="14" viewBox="0 0 19 14" fill="#35363f">
            <path d="M4 13a4 4 0 0 1 0-8C5 0 13-1 14 5q5 4 1 8z" />
            <circle cx="16" cy="11" r="3" fill="#f0907f" />
          </svg>
          <Divider size={16} tone="#efefef" />
          <BarButton>
            <svg width="16" height="16" viewBox="0 0 16 16">
              <circle cx="8" cy="8" r="8" fill="#c4c6ca" />
              <path d="M7 3q5 2 4 10l-4 1q-3-5 0-11z" fill="#f2f2f4" />
            </svg>
            李欣隆正在共享屏幕
            <Chevron size={11} />
          </BarButton>
        </BarSide>
        <BarSide gap={16}>
          <BarButton>
            <svg width="16" height="16" viewBox="0 0 16 16" fill="none" stroke="currentColor" strokeWidth="1.2">
              <path d="M6 2H1v12h14v-3M9 1h6v7H9z" />
            </svg>
            演讲者视图
            <Chevron size={11} />
          </BarButton>
          <BarButton>
            <ShieldCheck size={16} strokeWidth={1.4} />
            安全
            <Chevron size={11} />
          </BarButton>
          <BarButton>
            <svg width="17" height="16" viewBox="0 0 17 16" fill="none" stroke="currentColor" strokeWidth="1.2">
              <path d="M5 1h7l4 7-4 7H5L1 8z" />
              <circle cx="8" cy="8" r="2.5" />
            </svg>
            设置
          </BarButton>
          <Maximize size={15} strokeWidth={1.4} />
          <Divider size={12} tone="#efefef" />
          <Minus size={13} strokeWidth={1.5} />
          <Copy size={13} strokeWidth={1.5} transform="scale(-1 1)" />
          <X size={14} strokeWidth={1.5} />
        </BarSide>
      </MeetingBar>
      <DockedPanel />

      <Stage>
        <Window>
          <TitleBar>
            <PaintLogo size={14} />
            <Title>无标题 - 画图</Title>
            <Cell w={40} aria-label="最小化">
              <Minus size={12} strokeWidth={2} />
            </Cell>
            <Cell w={40} aria-label="还原">
              <svg width="11" height="11" viewBox="0 0 11 11" fill="none" stroke="#111" strokeWidth="1.4">
                <path d="M1 3h7v7H1zM3 1h5q2 0 2 2v5" />
              </svg>
            </Cell>
            <Cell w={44} aria-label="关闭">
              <X size={14} strokeWidth={1.7} />
            </Cell>
          </TitleBar>
          <MenuRow>
            <Cell w={53} size={13}>文件</Cell>
            <Cell w={53} size={13}>编辑</Cell>
            <Cell w={55} size={13}>查看</Cell>
            <Divider size={26} />
            <Cell w={42} aria-label="保存">
              <Save size={15} strokeWidth={1.5} />
            </Cell>
            <Divider size={26} />
            <Cell w={42} aria-label="共享">
              <svg width="15" height="15" viewBox="0 0 15 15" fill="none" stroke="#1d2324" strokeWidth="1.2">
                <path d="M6 2H3Q1 2 1 4v8q0 2 2 2h8q2 0 2-2v-1M9 1l5 4-5 4V7Q6 7 4 10q0-6 5-7z" />
              </svg>
            </Cell>
            <Divider size={26} />
            <Cell w={42} aria-label="撤消">
              <svg width="15" height="16" viewBox="0 0 15 16" fill="none" stroke="#1d2324" strokeWidth="1.3">
                <path d="M2 1v5h5M2 6c3-5 8-5 10-2s1 5-1 7l-5 4" />
              </svg>
            </Cell>
            <Cell w={32} aria-label="重做">
              <svg width="15" height="16" viewBox="0 0 15 16" fill="none" stroke="#1d2324" strokeWidth="1.3">
                <path d="M13 1v5H8M13 6C10 1 5 1 3 4s-1 5 1 7l5 4" />
              </svg>
            </Cell>
            <Grow />
            <Cell w={44} aria-label="设置">
              <Settings size={16} strokeWidth={1.5} />
            </Cell>
          </MenuRow>

          <RibbonBar />

          <Workspace>
            <Drawing />
            <VScroll>
              <Arrow w={10} h={16} aria-label="向上">
                <Triangle turn={0} />
              </Arrow>
              <Gap share={202} />
              <Thumb vertical share={446} />
              <Gap share={75} />
              <Arrow w={10} h={16} aria-label="向下">
                <Triangle turn={180} />
              </Arrow>
            </VScroll>
            <SizePanel>
              <Waves w={16} />
              <Slider
                type="range"
                aria-label="画笔大小"
                $vertical
                $fill={8}
                value={brush}
                onChange={(e) => setBrush(e.target.value)}
              />
            </SizePanel>
          </Workspace>
          <HScroll>
            <Arrow w={15} h={13} aria-label="向左">
              <Triangle turn={-90} />
            </Arrow>
            <Thumb share={1481} />
            <Gap share={94} />
            <Arrow w={28} h={13} aria-label="向右">
              <Triangle turn={90} />
            </Arrow>
          </HScroll>

          <StatusBar>
            <StatusItem w={119} line>
              <MousePointer2 size={14} strokeWidth={1.5} />
              631, 521像素
            </StatusItem>
            <StatusItem w={126} indent={7} line>
              <SquareDashed size={14} strokeWidth={1.7} />
            </StatusItem>
            <StatusItem w={140} indent={6}>
              <svg width="13" height="13" viewBox="0 0 13 13" fill="none" stroke="#1d2324" strokeWidth="1.2">
                <path d="M2 0v13M11 0v13M0 2h13M0 11h13" />
              </svg>
              1913 × 1355像素
            </StatusItem>
            <Grow />
            <Focus size={15} strokeWidth={1.5} />
            <ZoomField>
              <select aria-label="缩放" defaultValue="138%">
                <option>138%</option>
                <option>100%</option>
              </select>
              <Chevron />
            </ZoomField>
            <ZoomControls>
              <ZoomOut size={16} strokeWidth={1.5} />
              <Slider
                type="range"
                aria-label="缩放比例"
                $fill={13}
                value={zoom}
                onChange={(e) => setZoom(e.target.value)}
              />
              <ZoomIn size={16} strokeWidth={1.5} />
            </ZoomControls>
          </StatusBar>

          <InnerTaskbar>
            <Weather>
              <svg width="25" height="28" viewBox="0 0 25 28">
                <path d="M5 23a5 5 0 0 1 0-9q3-7 10-3 8 0 8 7 0 5-4 5z" fill="#8fb9ec" />
                <path d="M5 22a4 4 0 0 1 1-7q8-4 11 3 5 1 4 4z" fill="#b9d5f6" />
                <circle cx="18" cy="7" r="7" fill="#c42b1c" />
                <text x="18" y="11" textAnchor="middle" fontSize="11" fill="#fff">
                  2
                </text>
              </svg>
              <div>
                8°C
                <br />阴
              </div>
            </Weather>
            <Dock>
              <DockItem aria-label="开始">
                <WinLogo size={23} color="#38b6f0" color2="#1089d6" />
              </DockItem>
              <SearchPill>
                <Search size={15} strokeWidth={2} />
                <input type="text" aria-label="搜索" placeholder="搜索" />
                <Scenery w={48} />
              </SearchPill>
              <DockItem aria-label="任务视图">
                <svg width="22" height="22" viewBox="0 0 22 22">
                  <rect y="6" width="17" height="16" rx="1" fill="#33373a" />
                  <rect x="6" width="16" height="15" rx="1" fill="#f4f7f8" opacity=".85" />
                </svg>
              </DockItem>
              <DockItem open aria-label="文件资源管理器">
                <Folder size={23} />
              </DockItem>
              <DockItem open aria-label="Edge">
                <Edge />
              </DockItem>
              <DockItem open aria-label="WPS">
                <Wps size={22} />
              </DockItem>
              <DockItem open aria-label="G">
                <svg width="23" height="23" viewBox="0 0 23 23">
                  <circle cx="11.5" cy="11.5" r="11.5" fill="#111516" />
                  <path d="M13 6a6 6 0 1 0 0 11M12 12h5v5" fill="none" stroke="#fff" strokeWidth="2.4" />
                </svg>
              </DockItem>
              <DockItem open aria-label="腾讯会议">
                <MeetLogo size={21} bg="#0a6cf5" fg="#fff" />
              </DockItem>
              <DockItem active aria-label="画图">
                <PaintLogo size={23} />
              </DockItem>
              <DockItem open aria-label="Dev-C++">
                <DevLogo size={23} text={10} />
              </DockItem>
            </Dock>
            <Tray end={18}>
              <Cell w={30} aria-label="显示隐藏的图标">
                <ChevronUp size={14} />
              </Cell>
              <Cell w={30} aria-label="麦克风">
                <Mic size={16} strokeWidth={1.6} color="#2467b8" />
              </Cell>
              <Cell w={30} aria-label="触摸板">
                <PanelBottom size={16} strokeWidth={1.6} />
              </Cell>
              <Cell w={32} size={14}>英</Cell>
              <Cell w={23} aria-label="网络">
                <Wifi size={15} strokeWidth={2} />
              </Cell>
              <Cell w={23} aria-label="音量">
                <Volume2 size={16} strokeWidth={1.5} />
              </Cell>
              <Cell w={23} aria-label="电池">
                <BatteryCharging size={16} strokeWidth={2} fill="#1d2324" />
              </Cell>
              <Clock>
                11:08
                <br />
                2025/2/19
              </Clock>
              <BellRing size={15} strokeWidth={2} fill="#1d2324" />
            </Tray>
          </InnerTaskbar>

          <Speaking>
            <svg width="17" height="18" viewBox="0 0 17 18" fill="none">
              <rect x="6" y="1" width="6" height="10" rx="3" fill="#f1f1f1" />
              <path d="M4 9q1 5 5 5t5-5M9 14v3M6 17h6" stroke="#f1f1f1" strokeWidth="1.4" />
              <path d="M2 16L15 2" stroke="#b5453b" strokeWidth="1.6" />
            </svg>
            <Divider size={23} tone="#55595b" />
            <span>正在讲话:   李欣隆;</span>
            <Grow />
            <svg width="36" height="22" viewBox="0 0 36 22" fill="#54585a">
              <path d="M0 12L10 1l8 9 6-9 12 4v15H20l-2-3-4 4H8z" opacity=".7" />
              <path d="M16 13l7-9 7 9-7 8z" />
            </svg>
          </Speaking>
        </Window>

        <ShareTag>
          <Mic size={14} fill="#35c48d" strokeWidth={2} />
          <svg width="12" height="11" viewBox="0 0 12 11">
            <rect width="12" height="9" rx="1" fill="#fff" />
            <path d="M3 6l3-3 3 3M3 10h6" stroke="#555" strokeWidth="1.3" fill="none" />
          </svg>
          李欣隆的屏幕共享
        </ShareTag>
      </Stage>

      <Taskbar>
        <Cell w={36} aria-label="开始">
          <WinLogo size={16} color="#fff" />
        </Cell>
        <TaskSearch>
          <Search size={16} strokeWidth={1.8} transform="scale(-1 1)" />
          <input type="text" aria-label="搜索" placeholder="搜索" />
          <Scenery w={58} />
        </TaskSearch>
        <Cell w={38} aria-label="任务视图">
          <svg width="17" height="15" viewBox="0 0 17 15" fill="none" stroke="#fff" strokeWidth="1.5">
            <path d="M1 0v2h10V0M1 5h10v6H1zM1 15v-2h10v2M15 0v3M15 5v4M15 11v4" />
          </svg>
        </Cell>
        <Cell w={38} aria-label="画板">
          <svg width="16" height="16" viewBox="0 0 16 16" fill="none" stroke="#fff" strokeWidth="1.3">
            <rect width="16" height="16" rx="2" fill="#8e56a8" stroke="none" />
            <ellipse cx="8" cy="8" rx="6" ry="4.5" transform="rotate(-45 8 8)" />
            <path d="M3 13L11 5" />
          </svg>
        </Cell>
        <Cell w={37} aria-label="Typora">
          <Badge box={14} bg="#ececec" fg="#777" size={11}>
            T
          </Badge>
        </Cell>
        <Cell w={37} aria-label="终端">
          <svg width="15" height="14" viewBox="0 0 15 14">
            <rect width="15" height="14" fill="#fff" />
            <path d="M0 0h15v3H0zM1 4h6v2H5v7H3V6H1zM8 4h6v9h-2V6h-1v7H8z" fill="#1b22b4" />
          </svg>
        </Cell>
        <Task w={146}>
          <svg width="16" height="16" viewBox="0 0 16 16">
            <circle cx="8" cy="8" r="8" fill="#fbc116" />
            <path d="M1 4a8 8 0 0 1 14 0H8L5 10z" fill="#e33b2e" />
            <path d="M1 4l4 6 4 2-2 4A8 8 0 0 1 1 4z" fill="#2da94f" />
            <circle cx="8" cy="8" r="4" fill="#fff" />
            <circle cx="8" cy="8" r="3" fill="#4285f4" />
          </svg>
          作业详情 - 海亮教育...
        </Task>
        <AppRow>
          <Cell w={37} aria-label="Notepad++">
            <svg width="16" height="17" viewBox="0 0 16 17">
              <path d="M1 2h12v14H1z" fill="#f4f4ec" />
              <path d="M2 6h10v9H2z" fill="#a6d83c" />
              <path d="M2 1v3M5 1v3M8 1v3M11 1v3" stroke="#888" />
              <path d="M8 11l6-8 2 1-6 8z" fill="#e7a524" />
            </svg>
          </Cell>
          <Cell w={37} aria-label="Dev-C++">
            <DevLogo size={16} text={10} />
          </Cell>
          <Cell w={37} aria-label="录屏">
            <svg width="16" height="16" viewBox="0 0 16 16">
              <rect width="16" height="16" rx="4" fill="#f39a1f" />
              <circle cx="8" cy="9" r="4" fill="none" stroke="#fff" strokeWidth="2" />
              <path d="M3 3l3 2M13 3l-3 2" stroke="#fff" />
            </svg>
          </Cell>
          <Cell w={37} aria-label="Excel">
            <svg width="16" height="16" viewBox="0 0 16 16">
              <path d="M5 0h11v16H5z" fill="#21a366" />
              <path d="M10 0h6v5h-6zM10 10h6v6h-6z" fill="#33c481" />
              <path d="M0 4h9v9H0z" fill="#107c41" />
              <path d="M3 6l3 5M6 6l-3 5" stroke="#fff" strokeWidth="1.4" />
            </svg>
          </Cell>
          <Cell w={37} aria-label="计算器">
            <svg width="13" height="16" viewBox="0 0 13 16">
              <rect width="13" height="16" rx="1" fill="#7d8790" />
              <rect x="2" y="1" width="9" height="4" fill="#8fd3ee" />
              <path d="M2 8h9M2 11h9M2 14h9" stroke="#e8edf0" strokeWidth="2" strokeDasharray="2 1.5" />
            </svg>
          </Cell>
          <Cell w={37} aria-label="文件资源管理器">
            <Folder size={16} />
          </Cell>
          <Cell w={37} aria-label="WPS">
            <Wps size={16} />
          </Cell>
        </AppRow>
        <Task w={152}>
          <MeetLogo size={15} bg="#0a6cf5" fg="#fff" />
          腾讯会议
        </Task>
        <Task w={160} active>
          <Gap />
          <MeetLogo size={15} bg="#0a6cf5" fg="#fff" />
          Cynthia的个人会议室
        </Task>
        <Grow />
        <Tray end={12}>
          <Cell w={50} aria-label="资讯">
            <svg width="24" height="17" viewBox="0 0 24 17" fill="none" stroke="#fff" strokeWidth="1.5">
              <path d="M1 1h19v15H3q-2 0-2-2zM20 4h3v10q0 2-2 2h-2M4 5h13M4 8h5v5H4zM11 8h6M11 10.500h6M11 13h6" />
            </svg>
          </Cell>
          <Cell w={34} aria-label="显示隐藏的图标">
            <ChevronUp size={18} strokeWidth={1.8} />
          </Cell>
          <Cell w={32} aria-label="网络">
            <svg width="16" height="15" viewBox="0 0 16 15" fill="none" stroke="#fff" strokeWidth="1.3">
              <path d="M5 2h10v8H4V6M10 10v4M6 14h8M1 1h3v4H1zM2 5v5" />
            </svg>
          </Cell>
          <Cell w={32} aria-label="手写笔">
            <svg width="16" height="16" viewBox="0 0 16 16" fill="none" stroke="#fff" strokeWidth="1.2">
              <path d="M5 12l1-4 6-7 2 2-6 7zM5 10c-6-1-5 5-1 5s4-3 6-5 3 1 5-2" />
            </svg>
          </Cell>
          <Cell w={22}>中</Cell>
          <Cell w={46}>11:09</Cell>
          <Cell w={34} aria-label="通知">
            <svg width="17" height="17" viewBox="0 0 17 17">
              <path d="M1 1h15v12H9l-3 3v-3H1z" fill="#fff" />
              <path d="M4 4h9M4 7h9M4 10h5" stroke="#232928" strokeWidth="1.3" />
              <circle cx="13" cy="12" r="3.5" fill="#fff" stroke="#232928" />
            </svg>
          </Cell>
        </Tray>
        <ShowDesktop />
      </Taskbar>

      <Watermark>
        <p>激活 Windows</p>
        <p>转到“设置”以激活Windows。</p>
      </Watermark>
    </Page>
  );
};

export default App;
